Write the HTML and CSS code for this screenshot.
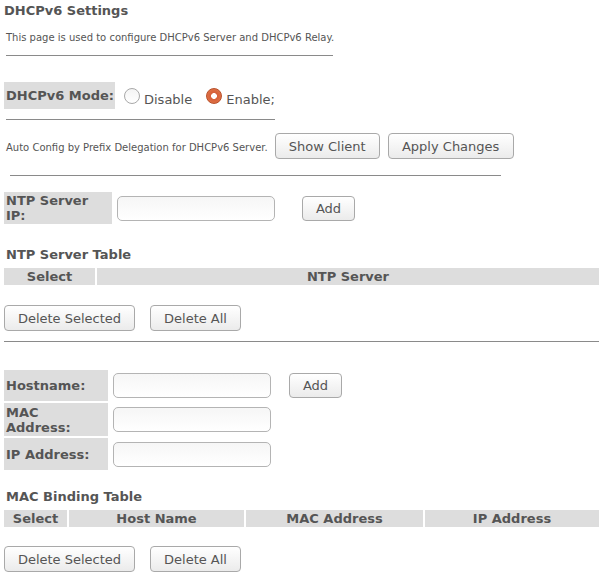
FILE: index.html
```html
<!DOCTYPE html>
<html>
<head>
<meta charset="utf-8">
<link rel="stylesheet" href="styles.css">
</head>
<body>
<div class="page">
  <h1 class="title">DHCPv6 Settings</h1>
  <p class="intro">This page is used to configure DHCPv6 Server and DHCPv6 Relay.</p>
  <hr class="rule rule-intro">

  <div class="mode-row">
    <div class="label-cell mode-label">DHCPv6 Mode:</div>
    <label class="radio-opt"><input type="radio" name="mode" class="radio"><span>Disable</span></label>
    <label class="radio-opt"><input type="radio" name="mode" class="radio" checked><span>Enable;</span></label>
  </div>
  <hr class="rule rule-mode">

  <div class="auto-row">
    <span class="small-text">Auto Config by Prefix Delegation for DHCPv6 Server.</span>
    <button class="btn btn-show">Show Client</button>
    <button class="btn btn-apply">Apply Changes</button>
  </div>
  <hr class="rule rule-auto">

  <div class="ntp-row">
    <div class="label-cell ntp-label">NTP Server IP:</div>
    <input type="text" class="field ntp-field">
    <button class="btn btn-add ntp-add">Add</button>
  </div>

  <h2 class="section-title ntp-title">NTP Server Table</h2>
  <table class="list-table">
    <tr>
      <th class="col-select-ntp">Select</th>
      <th>NTP Server</th>
    </tr>
  </table>
  <div class="btn-row">
    <button class="btn btn-del">Delete Selected</button>
    <button class="btn btn-delall">Delete All</button>
  </div>
  <hr class="rule rule-full">

  <table class="form-table">
    <tr class="row-host">
      <td class="label-cell host-label">Hostname:</td>
      <td class="field-cell"><input type="text" class="field"></td>
      <td class="add-cell"><button class="btn btn-add">Add</button></td>
    </tr>
    <tr class="row-mac">
      <td class="label-cell host-label">MAC Address:</td>
      <td class="field-cell"><input type="text" class="field"></td>
      <td></td>
    </tr>
    <tr class="row-ip">
      <td class="label-cell host-label">IP Address:</td>
      <td class="field-cell"><input type="text" class="field"></td>
      <td></td>
    </tr>
  </table>

  <h2 class="section-title mac-title">MAC Binding Table</h2>
  <table class="list-table">
    <tr>
      <th class="col-select-mac">Select</th>
      <th class="col-host">Host Name</th>
      <th class="col-mac">MAC Address</th>
      <th>IP Address</th>
    </tr>
  </table>
  <div class="btn-row btn-row-last">
    <button class="btn btn-del">Delete Selected</button>
    <button class="btn btn-delall">Delete All</button>
  </div>
</div>
</body>
</html>
```

FILE: styles.css
```css
html, body {
  margin: 0;
  padding: 0;
  background: #fff;
}
body {
  font-family: "DejaVu Sans", sans-serif;
  color: #555;
  font-size: 13px;
}
.page {
  padding: 3px 0 0 4px;
}
.title {
  font-size: 13px;
  font-weight: bold;
  margin: 0;
  line-height: 16px;
}
.intro {
  font-size: 10px;
  margin: 13px 0 0 2px;
  line-height: 12px;
}
.rule {
  border: 0;
  border-top: 1px solid #8a8a8a;
  height: 0;
  margin: 0;
}
.rule-intro {
  width: 327px;
  margin: 11px 0 0 2px;
}
.mode-row {
  display: flex;
  align-items: center;
  margin-top: 26px;
  height: 27px;
}
.label-cell {
  background: #dddddd;
  font-weight: bold;
  font-size: 13px;
  color: #555;
}
.mode-label {
  width: 109px;
  height: 27px;
  line-height: 27px;
  padding-left: 2px;
}
.radio-opt {
  display: flex;
  align-items: center;
  font-size: 13px;
  margin-left: 9px;
}
.radio-opt + .radio-opt {
  margin-left: 14px;
}
.radio-opt span {
  margin-left: 4px;
  padding-top: 7px;
}
.radio {
  appearance: none;
  -webkit-appearance: none;
  width: 16px;
  height: 16px;
  margin: 0;
  border-radius: 50%;
  border: 1px solid #a8a8a8;
  background: linear-gradient(#f4f4f4, #fff);
  box-sizing: border-box;
}
.radio:checked {
  border: 1px solid #b8502b;
  background: radial-gradient(circle at 50% 50%, #fff 0 2.6px, #d5603a 3.2px, #e67b4c 100%);
}
.rule-mode {
  width: 269px;
  margin: 10px 0 0 2px;
}
.auto-row {
  display: flex;
  align-items: center;
  margin-top: 13px;
  height: 26px;
}
.small-text {
  font-size: 10px;
  margin-left: 2px;
  margin-top: 2px;
}
.btn {
  font-family: "DejaVu Sans", sans-serif;
  font-size: 13px;
  color: #555;
  background: linear-gradient(#ffffff, #ebebeb);
  border: 1px solid #a9a9a9;
  border-radius: 4px;
  height: 26px;
  padding: 0 12px;
  margin: 0;
  box-sizing: border-box;
}
.btn-show {
  margin-left: 7px;
  width: 105px;
}
.btn-apply {
  margin-left: 8px;
  width: 126px;
}
.rule-auto {
  width: 491px;
  margin: 16px 0 0 6px;
}
.ntp-row {
  display: flex;
  align-items: center;
  margin-top: 16px;
}
.ntp-label {
  height: 32px;
  line-height: 15px;
  padding: 1px 0 0 2px;
  box-sizing: border-box;
  width: 108px;
}
.field {
  border: 1px solid #b4b4b4;
  border-radius: 5px;
  background: linear-gradient(#f6f6f6, #ffffff);
  height: 25px;
  width: 158px;
  box-sizing: border-box;
  margin: 0;
  padding: 0 4px;
}
.ntp-field {
  margin-left: 5px;
}
.ntp-add {
  margin-left: 27px;
}
.btn-add {
  width: 53px;
  padding: 0;
  height: 25px;
}
.section-title {
  font-size: 13px;
  font-weight: bold;
  margin: 0;
  line-height: 16px;
  padding-left: 2px;
}
.ntp-title {
  margin-top: 23px;
}
.list-table {
  border-collapse: separate;
  border-spacing: 0;
  width: 595px;
  margin-top: 5px;
  table-layout: fixed;
}
.list-table th {
  box-sizing: border-box;
  background: #dddddd;
  background-clip: padding-box;
  font-weight: bold;
  font-size: 13px;
  height: 17px;
  line-height: 17px;
  padding: 0;
  text-align: center;
  border-left: 2px solid #fff;
}
.list-table th:first-child {
  border-left: 0;
}
.col-select-ntp {
  width: 91px;
}
.col-select-mac {
  width: 63px;
}
.col-host {
  width: 177px;
}
.col-mac {
  width: 179px;
}
.btn-row {
  display: flex;
  margin-top: 20px;
}
.btn-row-last {
  margin-top: 19px;
}
.btn-del {
  width: 131px;
  padding: 0;
}
.btn-delall {
  width: 91px;
  padding: 0;
  margin-left: 15px;
}
.rule-full {
  width: 595px;
  margin-top: 10px;
}
.form-table {
  border-collapse: separate;
  border-spacing: 0 2px;
  margin-top: 26px;
}
.form-table td {
  padding: 0;
  vertical-align: middle;
}
.host-label {
  width: 96px;
  line-height: 15px;
  padding: 0 6px 0 2px !important;
}
.row-host td {
  height: 31px;
}
.row-mac td {
  height: 33px;
}
.row-ip td {
  height: 32px;
}
.field-cell {
  padding-left: 5px !important;
}
.add-cell {
  padding-left: 18px !important;
}
.mac-title {
  margin-top: 17px;
}
```
